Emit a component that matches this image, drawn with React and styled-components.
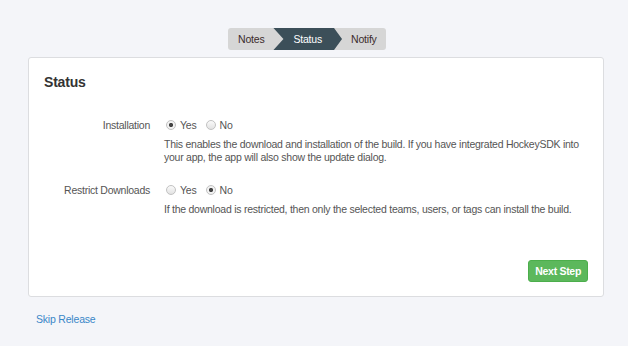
import styled, { createGlobalStyle } from "styled-components";

const GlobalStyle = createGlobalStyle`
  body {
    margin: 0;
    background: #f4f5f9;
    font-family: "Liberation Sans", Arial, sans-serif;
    color: #555;
  }
`;

function App() {
  const steps = ["Notes", "Status", "Notify"];
  const active = 1;

  return (
    <>
      <GlobalStyle />
      <Page>
        <Steps>
          {steps.map((s, i) => (
            <Step key={s} $active={i === active} $pos={i}>
              {s}
            </Step>
          ))}
        </Steps>
        <Card>
          <Title>Status</Title>
          <Form>
            <Row>
              <Label>Installation</Label>
              <Field>
                <Options>
                  <Option>
                    <Radio $checked />
                    Yes
                  </Option>
                  <Option>
                    <Radio />
                    No
                  </Option>
                </Options>
                <Help>
                  This enables the download and installation of the build. If you have integrated HockeySDK into
                  your app, the app will also show the update dialog.
                </Help>
              </Field>
            </Row>
            <Row>
              <Label>Restrict Downloads</Label>
              <Field>
                <Options>
                  <Option>
                    <Radio />
                    Yes
                  </Option>
                  <Option>
                    <Radio $checked />
                    No
                  </Option>
                </Options>
                <Help>
                  If the download is restricted, then only the selected teams, users, or tags can install the build.
                </Help>
              </Field>
            </Row>
          </Form>
          <Footer>
            <NextButton>Next Step</NextButton>
          </Footer>
        </Card>
        <SkipLink>Skip Release</SkipLink>
      </Page>
    </>
  );
}

const stepPadding = ["0 9px 0 10px", "0 20px 0 20px", "0 9px 0 9px"];

const Page = styled.div`
  width: 628px;
  height: 346px;
  padding: 28px 24px 0 28px;
  box-sizing: border-box;
`;

const Steps = styled.div`
  display: flex;
  width: max-content;
  margin-left: 200px;
  height: 22px;
  background: #d6d6d6;
  border-radius: 3px;
`;

const Step = styled.div`
  height: 22px;
  line-height: 22px;
  font-size: 10.5px;
  letter-spacing: -0.2px;
  padding: ${(p) => stepPadding[p.$pos]};
  background: ${(p) => (p.$active ? "#3c4f59" : "transparent")};
  color: ${(p) => (p.$active ? "#fff" : "#3b2b2b")};
  clip-path: ${(p) =>
    p.$active
      ? "polygon(0 0, calc(100% - 8px) 0, 100% 50%, calc(100% - 8px) 100%, 0 100%, 10px 50%)"
      : "none"};
`;

const Card = styled.div`
  margin-top: 7px;
  height: 240px;
  box-sizing: border-box;
  background: #fff;
  border: 1px solid #dcdde0;
  border-radius: 3px;
  padding: 16px 15px 14px 15px;
  display: flex;
  flex-direction: column;
`;

const Title = styled.h2`
  margin: 0;
  font-size: 14px;
  letter-spacing: -0.2px;
  font-weight: bold;
  color: #333;
`;

const Form = styled.div`
  margin-top: 27px;
  display: flex;
  flex-direction: column;
  gap: 18px;
`;

const Row = styled.div`
  display: flex;
  gap: 14px;
`;

const Label = styled.div`
  width: 106px;
  text-align: right;
  font-size: 10.5px;
  letter-spacing: -0.25px;
  line-height: 16px;
`;

const Field = styled.div`
  flex: 1;
  display: flex;
  flex-direction: column;
  gap: 5px;
`;

const Options = styled.div`
  display: flex;
  gap: 9px;
  font-size: 10.5px;
  letter-spacing: -0.2px;
  line-height: 16px;
  margin-left: 2px;
`;

const Option = styled.label`
  display: flex;
  align-items: center;
  gap: 4px;
`;

const Radio = styled.span`
  width: 8px;
  height: 8px;
  border-radius: 50%;
  border: 1px solid #c2c2c2;
  background: ${(p) =>
    p.$checked
      ? "radial-gradient(circle, #444 0 1.8px, #f2f2f2 2.4px)"
      : "linear-gradient(#fafafa, #e2e2e2)"};
  box-sizing: content-box;
`;

const Help = styled.p`
  margin: 0;
  font-size: 10.5px;
  letter-spacing: -0.25px;
  line-height: 13px;
  color: #555;
`;

const Footer = styled.div`
  margin-top: auto;
  display: flex;
  justify-content: flex-end;
`;

const NextButton = styled.button`
  background: #5cb85c;
  border: 1px solid #4cae4c;
  color: #fff;
  border-radius: 3px;
  font-family: "Liberation Sans", Arial, sans-serif;
  font-size: 10.5px;
  letter-spacing: -0.3px;
  font-weight: bold;
  height: 22px;
  padding: 0 6px;
`;

const SkipLink = styled.a`
  display: inline-block;
  margin: 16px 0 0 8px;
  font-size: 10.5px;
  letter-spacing: -0.2px;
  color: #3a87c8;
  cursor: pointer;
`;

export default App;
